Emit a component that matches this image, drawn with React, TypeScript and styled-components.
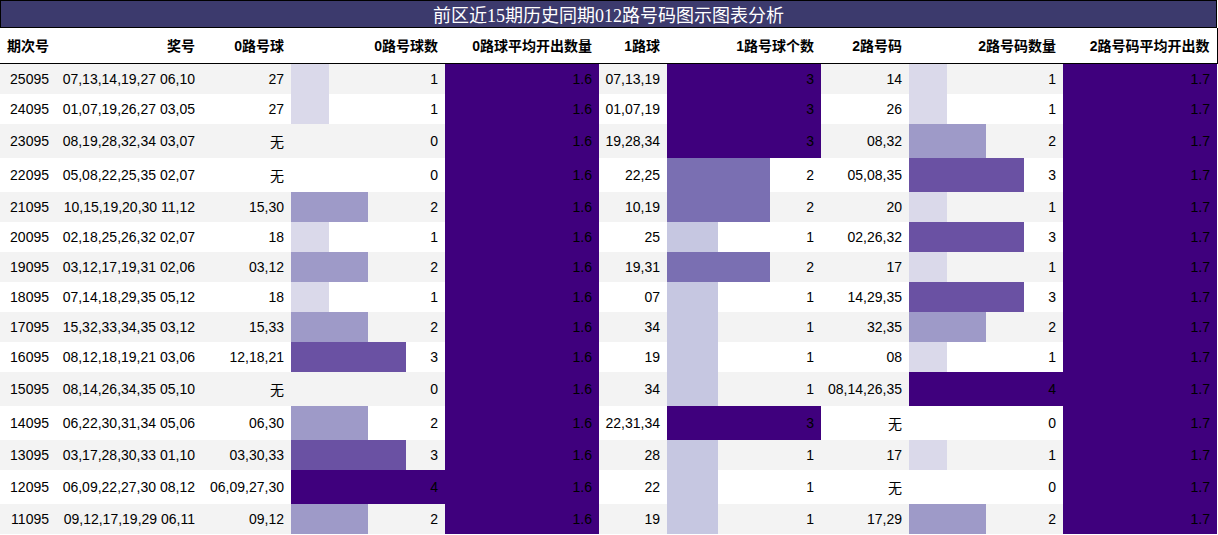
import React from 'react';
import styled, { createGlobalStyle } from 'styled-components';

const GlobalStyle = createGlobalStyle`
  html, body { margin: 0; padding: 0; background: #ffffff; }
  body { font-family: "Liberation Sans", "Noto Sans CJK SC", sans-serif; }
`;

const Wrapper = styled.div`
  width: 1217px;
`;

const Title = styled.div`
  box-sizing: border-box;
  width: 1217px;
  border: 1px solid #000;
  background: #3c3a6d;
  color: #ffffff;
  text-align: center;
  font-family: "Liberation Serif", "Noto Sans CJK SC", serif;
  font-size: 18px;
  line-height: normal;
`;

const Table = styled.table`
  width: 1217px;
  table-layout: fixed;
  border-collapse: collapse;
  border-spacing: 0;
  font-size: 14px;
  color: #000;
`;

const HeadRow = styled.tr`
  background: #ffffff;
`;

const HeadCell = styled.th`
  padding: 7px 7px 8px 0;
  text-align: right;
  font-weight: bold;
  white-space: nowrap;
  border-bottom: 1px solid #000;
  &:last-child { border-right: 1px solid #000; }
`;

const Row = styled.tr<{ $alt: boolean }>`
  background: ${(p) => (p.$alt ? '#f3f3f3' : '#ffffff')};
`;

const Cell = styled.td`
  padding: 7px 7px 7px 0;
  text-align: right;
  white-space: nowrap;
`;

const BarCell = styled(Cell)<{ $pct: number; $color: string }>`
  background: ${(p) =>
    p.$pct > 0
      ? `linear-gradient(90deg, ${p.$color} ${p.$pct}%, transparent ${p.$pct}%)`
      : 'transparent'};
`;

const AvgCell = styled(Cell)`
  background: #3f007d;
`;

const purples = (f: number): string => {
  if (f >= 0.99) return '#3f007d';
  if (f >= 0.74) return '#6a51a3';
  if (f >= 0.66) return '#7a6fb2';
  if (f >= 0.49) return '#9e9ac8';
  if (f >= 0.33) return '#c6c7e1';
  return '#dad9ea';
};

type R = [string, string, string, number, string, number, string, number];

const rows: R[] = [
  ['25095', '07,13,14,19,27 06,10', '27', 1, '07,13,19', 3, '14', 1],
  ['24095', '01,07,19,26,27 03,05', '27', 1, '01,07,19', 3, '26', 1],
  ['23095', '08,19,28,32,34 03,07', '无', 0, '19,28,34', 3, '08,32', 2],
  ['22095', '05,08,22,25,35 02,07', '无', 0, '22,25', 2, '05,08,35', 3],
  ['21095', '10,15,19,20,30 11,12', '15,30', 2, '10,19', 2, '20', 1],
  ['20095', '02,18,25,26,32 02,07', '18', 1, '25', 1, '02,26,32', 3],
  ['19095', '03,12,17,19,31 02,06', '03,12', 2, '19,31', 2, '17', 1],
  ['18095', '07,14,18,29,35 05,12', '18', 1, '07', 1, '14,29,35', 3],
  ['17095', '15,32,33,34,35 03,12', '15,33', 2, '34', 1, '32,35', 2],
  ['16095', '08,12,18,19,21 03,06', '12,18,21', 3, '19', 1, '08', 1],
  ['15095', '08,14,26,34,35 05,10', '无', 0, '34', 1, '08,14,26,35', 4],
  ['14095', '06,22,30,31,34 05,06', '06,30', 2, '22,31,34', 3, '无', 0],
  ['13095', '03,17,28,30,33 01,10', '03,30,33', 3, '28', 1, '17', 1],
  ['12095', '06,09,22,27,30 08,12', '06,09,27,30', 4, '22', 1, '无', 0],
  ['11095', '09,12,17,19,29 06,11', '09,12', 2, '19', 1, '17,29', 2],
];

const widths = [56, 146, 89, 154, 154, 68, 154, 88, 154, 154];
const headers = [
  '期次号',
  '奖号',
  '0路号球',
  '0路号球数',
  '0路球平均开出数量',
  '1路球',
  '1路号球个数',
  '2路号码',
  '2路号码数量',
  '2路号码平均开出数',
];

const Bar: React.FC<{ value: number; max: number }> = ({ value, max }) => {
  const f = value / max;
  return (
    <BarCell $pct={f * 100} $color={purples(f)}>
      {value}
    </BarCell>
  );
};

export default function App() {
  return (
    <Wrapper>
      <GlobalStyle />
      <Title>前区近15期历史同期012路号码图示图表分析</Title>
      <Table>
        <colgroup>
          {widths.map((w, i) => (
            <col key={i} style={{ width: w }} />
          ))}
        </colgroup>
        <thead>
          <HeadRow>
            {headers.map((h) => (
              <HeadCell key={h}>{h}</HeadCell>
            ))}
          </HeadRow>
        </thead>
        <tbody>
          {rows.map((r, i) => (
            <Row key={r[0]} $alt={i % 2 === 0}>
              <Cell>{r[0]}</Cell>
              <Cell>{r[1]}</Cell>
              <Cell>{r[2]}</Cell>
              <Bar value={r[3]} max={4} />
              <AvgCell>1.6</AvgCell>
              <Cell>{r[4]}</Cell>
              <Bar value={r[5]} max={3} />
              <Cell>{r[6]}</Cell>
              <Bar value={r[7]} max={4} />
              <AvgCell>1.7</AvgCell>
            </Row>
          ))}
        </tbody>
      </Table>
    </Wrapper>
  );
}
